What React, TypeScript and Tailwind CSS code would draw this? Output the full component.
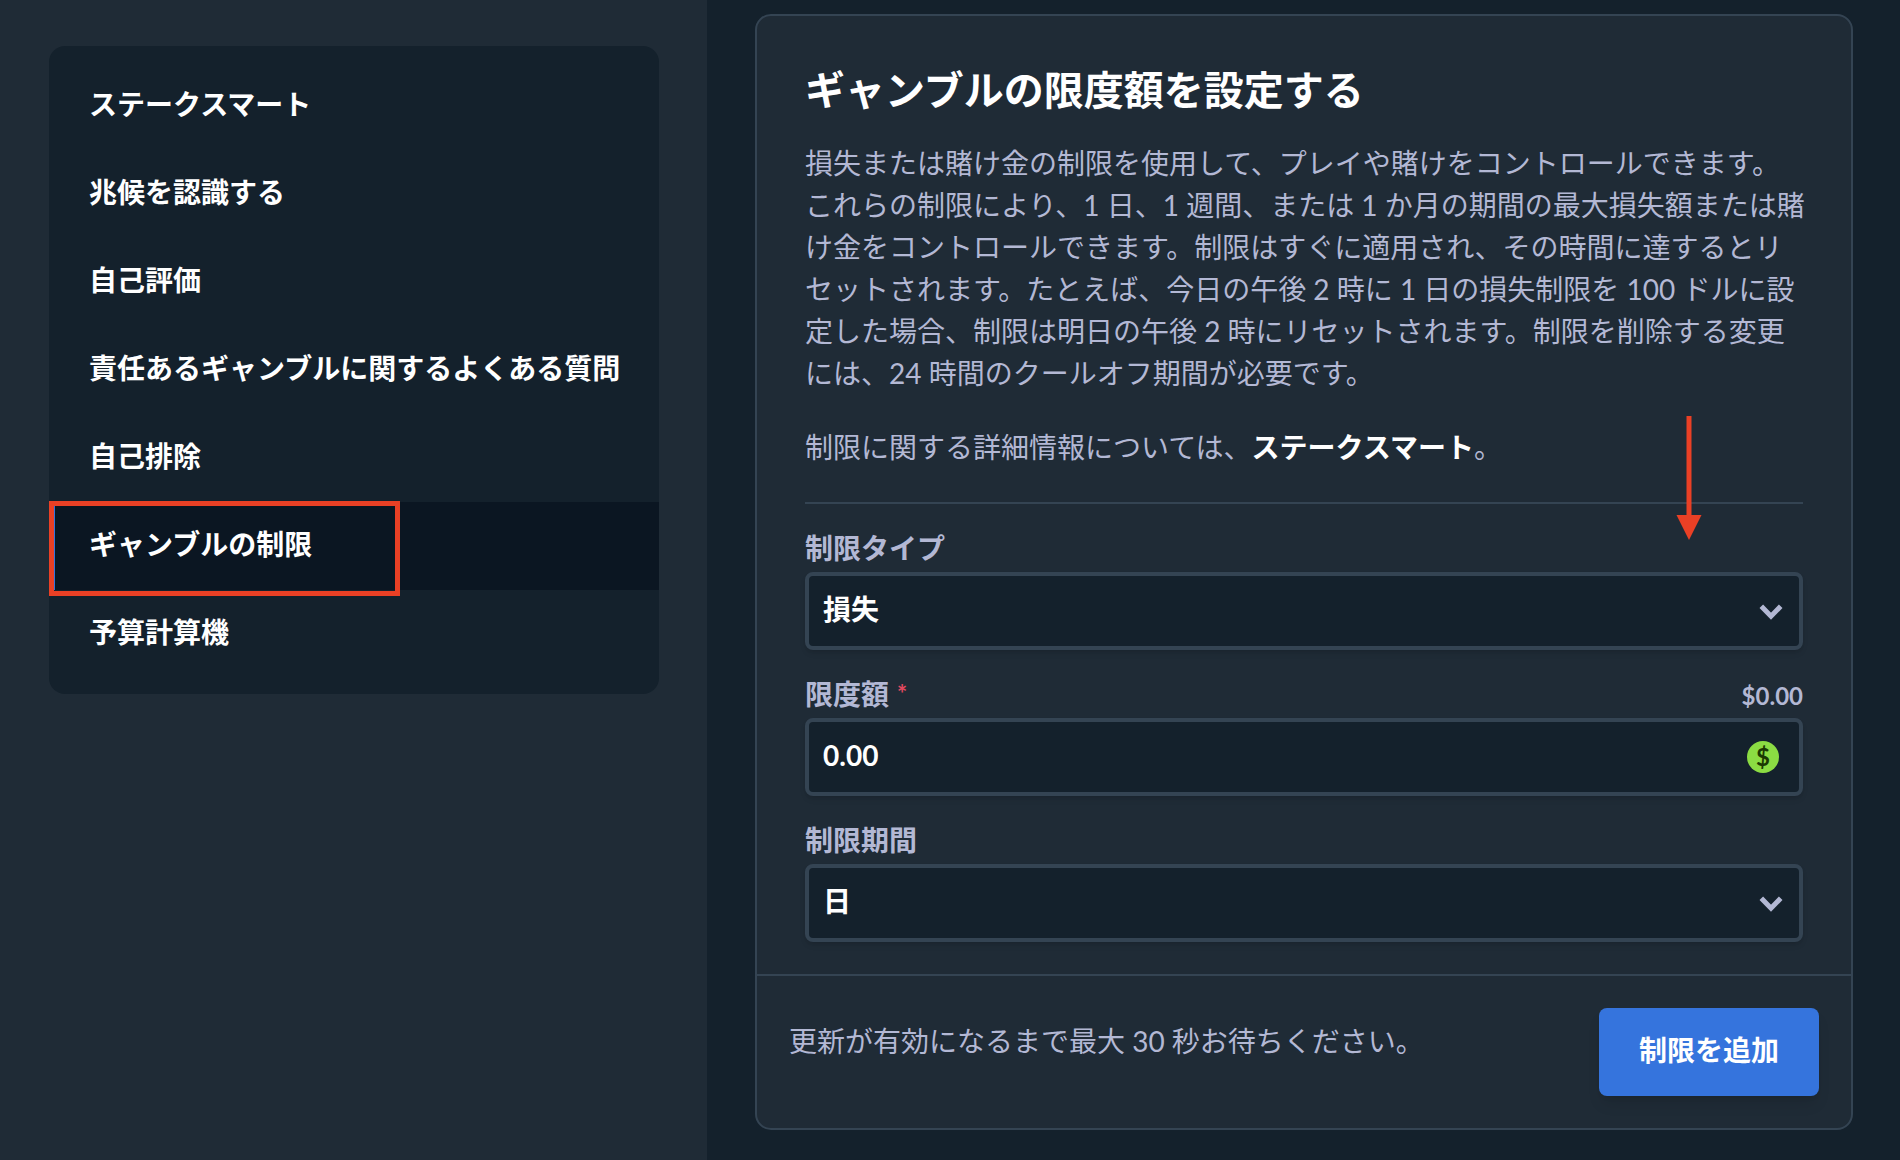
import { ReactNode } from 'react';

const menu = [
  'ステークスマート',
  '兆候を認識する',
  '自己評価',
  '責任あるギャンブルに関するよくある質問',
  '自己排除',
  'ギャンブルの制限',
  '予算計算機',
];

const ACTIVE = 'ギャンブルの制限';

function Sidebar() {
  return (
    <aside className="w-[707px] shrink-0 bg-[#1f2b36] pl-[49px] pr-12 pt-[46px]">
      <nav className="rounded-2xl bg-[#14212c] py-4">
        {menu.map((item) =>
          item === ACTIVE ? (
            <div key={item} className="relative">
              <a
                href="#"
                aria-current="page"
                className="block h-[88px] border-l-6 border-[#3574dd] bg-[#0b1622] pl-[34px] font-bold leading-[84px] text-white"
              >
                {item}
              </a>
              <span className="absolute left-0 -top-px h-[95px] w-[351px] border-5 border-[#ea4025]" />
            </div>
          ) : (
            <a
              key={item}
              href="#"
              className="block h-[88px] border-l-6 border-transparent pl-[34px] font-bold leading-[84px] text-white"
            >
              {item}
            </a>
          )
        )}
      </nav>
    </aside>
  );
}

function Field({ id, label, required, note, children }: {
  id: string;
  label: string;
  required?: boolean;
  note?: string;
  children: ReactNode;
}) {
  return (
    <div>
      <div className="flex h-11 items-start justify-between font-bold leading-10">
        <label htmlFor={id}>
          {label}
          {required && <span className="ml-2 align-top text-2xl leading-10 text-[#e2495f]">*</span>}
        </label>
        {note && <span className="self-center text-2xl">{note}</span>}
      </div>
      <div className="relative">{children}</div>
    </div>
  );
}

const control =
  'block h-[78px] w-full appearance-none rounded-lg border-4 border-[#344453] bg-[#14212c] px-[14px] pb-1 font-bold text-white shadow-md outline-none';

function Select({ id, options }: { id: string; options: string[] }) {
  return (
    <>
      <select id={id} className={control}>
        {options.map((o) => (
          <option key={o}>{o}</option>
        ))}
      </select>
      <svg
        className="pointer-events-none absolute right-5 top-8 h-4 w-6"
        viewBox="0 0 24 16"
        fill="none"
        stroke="#b3b8d4"
        strokeWidth="5"
      >
        <path d="M2.3 2.3 12 12.2l9.700-9.900" />
      </svg>
    </>
  );
}

function DollarIcon() {
  return (
    <span className="pointer-events-none absolute right-6 top-[23px] flex size-8 items-center justify-center rounded-full bg-[#8bdc43] text-2xl font-bold leading-8 text-[#1b3802]">
      $
    </span>
  );
}

function LimitCard() {
  return (
    <section className="relative rounded-2xl border-2 border-[#344453] bg-[#1f2b36]">
      <div className="px-12 pb-8 pt-12">
        <h1 className="text-[40px] font-bold leading-[52px] text-white">ギャンブルの限度額を設定する</h1>
        <p className="-mr-2 mt-[26px]">
          損失または賭け金の制限を使用して、プレイや賭けをコントロールできます。
          <br />
          これらの制限により、1 日、1 週間、または 1 か月の期間の最大損失額または賭け金をコントロールできます。制限はすぐに適用され、その時間に達するとリ
          <br />
          セットされます。たとえば、今日の午後 2 時に 1 日の損失制限を 100 ドルに設定した場合、制限は明日の午後 2 時にリセットされます。制限を削除する変更には、24 時間のクールオフ期間が必要です。
        </p>
        <p className="mt-8">
          制限に関する詳細情報については、<a href="#" className="font-bold text-white">ステークスマート</a>。
        </p>
        <hr className="mb-6 mt-[34px] border-t-2 border-[#344453]" />
        <div className="flex flex-col gap-6">
          <Field id="limit-type" label="制限タイプ">
            <Select id="limit-type" options={['損失', '賭け金']} />
          </Field>
          <Field id="amount" label="限度額" required note="$0.00">
            <input id="amount" type="text" defaultValue="0.00" className={control} />
            <DollarIcon />
          </Field>
          <Field id="period" label="制限期間">
            <Select id="period" options={['日', '週', '月']} />
          </Field>
        </div>
      </div>
      <div className="flex items-start justify-between border-t-2 border-[#344453] px-8 py-8">
        <p className="mt-3">更新が有効になるまで最大 30 秒お待ちください。</p>
        <button
          type="button"
          className="h-[88px] w-[220px] rounded-lg bg-[#3574dd] pb-1 font-bold text-white shadow-lg"
        >
          制限を追加
        </button>
      </div>
      <svg className="pointer-events-none absolute right-[149px] top-[400px] h-[124px] w-[26px]" viewBox="0 0 26 124" fill="#ea4025">
        <path d="M10.500 0h5v99h10L13 124 .5 99h10z" />
      </svg>
    </section>
  );
}

export default function App() {
  return (
    <div
      lang="ja"
      className="flex min-h-screen bg-[#14212c] font-[Lato,'Noto_Sans_CJK_JP',sans-serif] text-[28px] leading-[42px] text-[#b3b8d4]"
    >
      <Sidebar />
      <main className="min-w-0 flex-1 pb-[30px] pl-12 pr-[47px] pt-[14px]">
        <LimitCard />
      </main>
    </div>
  );
}
